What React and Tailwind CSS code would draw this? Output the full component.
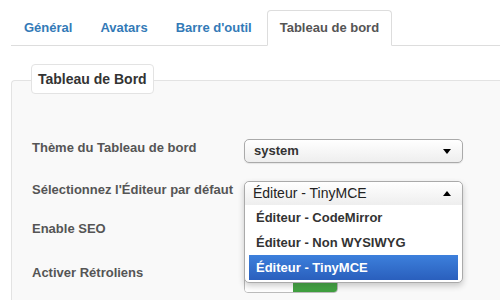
import React from "react";

function Caret({ up }) {
  return (
    <svg width="8" height="5" viewBox="0 0 8 5" className="shrink-0">
      {up ? <path d="M0 5 L4 0 L8 5 Z" fill="#000" /> : <path d="M0 0 L8 0 L4 5 Z" fill="#000" />}
    </svg>
  );
}

function Toggle() {
  return (
    <div className="flex h-[30px] w-[94px] overflow-hidden rounded-[4px] border border-[#bbb] bg-white">
      <div className="w-[48px] bg-white" />
      <div className="flex-1 bg-gradient-to-b from-[#62c462] to-[#3f9f3f]" />
    </div>
  );
}

export default function App() {
  const tab = "h-[36px] -mb-px flex items-center px-[12px] mr-[2px] text-[13px] font-bold border border-transparent rounded-t-[4px] text-[#337ab7]";
  return (
    <div className="w-[500px] h-[300px] overflow-hidden bg-white" style={{ fontFamily: '"Liberation Sans", Arial, sans-serif' }}>
      <div className="pt-[10px]">
        <div className="ml-[11px] flex border-b border-[#ddd] h-[36px]">
          <div className={tab}>Général</div>
          <div className={tab}>Avatars</div>
          <div className={tab}>Barre d'outil</div>
          <div className="h-[36px] -mb-px flex items-center px-[12px] text-[13px] font-bold border border-[#ddd] border-b-white bg-white rounded-t-[4px] text-[#555]">Tableau de bord</div>
        </div>
      </div>
      <div className="ml-[11px] mt-[34px] w-[520px] h-[260px] border-l border-t border-[#e3e3e3] rounded-tl-[4px] bg-[#f9f9f9]">
        <div className="flex">
          <div className="-mt-[17px] ml-[19px] flex h-[30px] items-center px-[6px] rounded-[4px] border border-[#e3e3e3] bg-white text-[14px] font-bold text-[#333]">
            Tableau de Bord
          </div>
        </div>
        <div className="pl-[20px] mt-[45px] flex flex-col text-[13px] font-bold text-[#555]">
          <div className="flex items-start h-[42px]">
            <div className="w-[212px] leading-[18px]">Thème du Tableau de bord</div>
            <div className="w-[219px] h-[24px] rounded-[5px] border border-[#aaa] bg-gradient-to-b from-white to-[#eee] flex items-center pl-[9px] pr-[11px] text-[#333] shadow-[0_1px_1px_rgba(0,0,0,0.08)]">
              <span className="flex-1">system</span>
              <Caret />
            </div>
          </div>
          <div className="flex items-start h-[39px]">
            <div className="w-[212px] leading-[18px]">Sélectionnez l'Éditeur par défaut</div>
            <div className="relative w-[219px]">
              <div className="absolute left-0 top-0 w-[219px] h-[102px] rounded-[5px] border border-[#aaa] bg-white shadow-[0_3px_6px_rgba(0,0,0,0.2)] z-10">
                <div className="h-[23px] rounded-t-[5px] bg-gradient-to-b from-white to-[#eee] flex items-center pl-[8px] pr-[11px]">
                  <span className="flex-1 text-[14px] font-normal text-[#222]">Éditeur - TinyMCE</span>
                  <Caret up />
                </div>
                <div className="px-[4px] text-[#333]">
                  <div className="h-[25px] flex items-center px-[7px]">Éditeur - CodeMirror</div>
                  <div className="h-[25px] flex items-center px-[7px]">Éditeur - Non WYSIWYG</div>
                  <div className="h-[25px] flex items-center px-[7px] text-white bg-gradient-to-b from-[#3d80dc] to-[#2a5fbd]">Éditeur - TinyMCE</div>
                </div>
              </div>
            </div>
          </div>
          <div className="flex items-start h-[44px]">
            <div className="w-[212px] leading-[18px]">Enable SEO</div>
            <div className="-mt-[1px]"><Toggle /></div>
          </div>
          <div className="flex items-start h-[44px]">
            <div className="w-[212px] leading-[18px]">Activer Rétroliens</div>
            <div className="-mt-[1px]"><Toggle /></div>
          </div>
        </div>
      </div>
    </div>
  );
}
